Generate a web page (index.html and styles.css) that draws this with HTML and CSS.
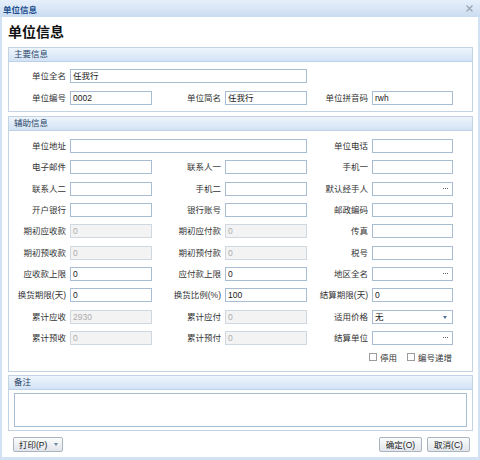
FILE: index.html
```html
<!DOCTYPE html>
<html lang="zh">
<head>
<meta charset="utf-8">
<title>单位信息</title>
<link rel="stylesheet" href="styles.css">
</head>
<body>
<div class="window">
  <div class="titlebar">
    <span class="title">单位信息</span>
    <svg class="close" width="7" height="7" viewBox="0 0 7 7"><path d="M0.5 0.5L6.5 6.5M6.5 0.5L0.5 6.5" stroke="#9aa4ae" stroke-width="1.2" fill="none"/></svg>
  </div>
  <div class="content">
    <div class="heading">单位信息</div>

    <div class="fs fs-main">
      <div class="fs-head">主要信息</div>
      <div class="grid">
        <div class="lbl">单位全名</div><div class="inp wide">任我行</div>
        <div class="lbl first">单位编号</div><div class="inp">0002</div>
        <div class="lbl">单位简名</div><div class="inp">任我行</div>
        <div class="lbl">单位拼音码</div><div class="inp">rwh</div>
      </div>
    </div>

    <div class="fs fs-aux">
      <div class="fs-head">辅助信息</div>
      <div class="grid">
        <div class="lbl">单位地址</div><div class="inp wide"></div>
        <div class="lbl">单位电话</div><div class="inp"></div>

        <div class="lbl">电子邮件</div><div class="inp"></div>
        <div class="lbl">联系人一</div><div class="inp"></div>
        <div class="lbl">手机一</div><div class="inp"></div>

        <div class="lbl">联系人二</div><div class="inp"></div>
        <div class="lbl">手机二</div><div class="inp"></div>
        <div class="lbl">默认经手人</div><div class="inp"><span class="dots"><i></i><i></i><i></i></span></div>

        <div class="lbl">开户银行</div><div class="inp"></div>
        <div class="lbl">银行账号</div><div class="inp"></div>
        <div class="lbl">邮政编码</div><div class="inp"></div>

        <div class="lbl">期初应收款</div><div class="inp dis">0</div>
        <div class="lbl">期初应付款</div><div class="inp dis">0</div>
        <div class="lbl">传真</div><div class="inp"></div>

        <div class="lbl">期初预收款</div><div class="inp dis">0</div>
        <div class="lbl">期初预付款</div><div class="inp dis">0</div>
        <div class="lbl">税号</div><div class="inp"></div>

        <div class="lbl">应收款上限</div><div class="inp">0</div>
        <div class="lbl">应付款上限</div><div class="inp">0</div>
        <div class="lbl">地区全名</div><div class="inp"><span class="dots"><i></i><i></i><i></i></span></div>

        <div class="lbl">换货期限(天)</div><div class="inp">0</div>
        <div class="lbl">换货比例(%)</div><div class="inp">100</div>
        <div class="lbl">结算期限(天)</div><div class="inp">0</div>

        <div class="lbl">累计应收</div><div class="inp dis">2930</div>
        <div class="lbl">累计应付</div><div class="inp dis">0</div>
        <div class="lbl">适用价格</div><div class="inp">无<span class="arrow"></span></div>

        <div class="lbl">累计预收</div><div class="inp dis">0</div>
        <div class="lbl">累计预付</div><div class="inp dis">0</div>
        <div class="lbl">结算单位</div><div class="inp"><span class="dots"><i></i><i></i><i></i></span></div>
      </div>
      <div class="checks">
        <span class="cb"></span><span class="cb-text">停用</span>
        <span class="cb"></span><span class="cb-text">编号递增</span>
      </div>
    </div>

    <div class="fs fs-note">
      <div class="fs-head">备注</div>
      <div class="note-area"></div>
    </div>

    <div class="footer">
      <div class="btn btn-print">打印(P)<span class="btn-arrow"></span></div>
      <div class="btn-group">
        <div class="btn btn-std">确定(O)</div>
        <div class="btn btn-std">取消(C)</div>
      </div>
    </div>
  </div>
</div>
</body>
</html>
```
FILE: styles.css
```css
html, body {
  margin: 0;
  padding: 0;
  width: 480px;
  height: 460px;
  overflow: hidden;
  background: #d2e2f3;
}
body {
  font-family: "Liberation Sans", "Noto Sans CJK SC", sans-serif;
  font-size: 8.5px;
  color: #333;
}
.window {
  display: flex;
  flex-direction: column;
  height: 460px;
}
.titlebar {
  flex: none;
  height: 17px;
  box-sizing: border-box;
  display: flex;
  align-items: center;
  justify-content: space-between;
  padding: 0 7px 0 3px;
  background: linear-gradient(#e6f0fb, #cadcf0);
}
.title {
  color: #1d4f8f;
  font-weight: bold;
  font-size: 8.5px;
}
.close { display: block; }
.content {
  flex: 1;
  margin: 0 2px 3px;
  padding: 0 5px 0 6px;
  background: #fff;
  display: flex;
  flex-direction: column;
}
.heading {
  flex: none;
  height: 30px;
  line-height: 30px;
  font-size: 14px;
  font-weight: bold;
  color: #111;
}
.fs {
  flex: none;
  border: 1px solid #c3d3e4;
}
.fs-head {
  height: 13px;
  line-height: 13px;
  border-bottom: 1px solid #bcd1e7;
  background: linear-gradient(#edf4fc, #d3e3f5);
  padding-left: 5px;
  color: #2a4667;
}
.grid {
  display: grid;
  grid-template-columns: 57px 82px 65px 82px 57px 81px;
  column-gap: 4px;
  align-items: center;
}
.fs-main .grid {
  padding: 7px 0 6px;
  row-gap: 8px;
}
.fs-aux {
  margin-top: 4px;
  padding-bottom: 8px;
}
.fs-aux .grid {
  padding-top: 8px;
  row-gap: 7.33px;
}
.lbl {
  text-align: right;
  white-space: nowrap;
  line-height: 14px;
  color: #333;
}
.first { grid-column-start: 1; }
.wide { grid-column: span 3; }
.inp {
  position: relative;
  height: 14px;
  box-sizing: border-box;
  border: 1px solid #a8bdd3;
  background: #fff;
  padding: 0 2px;
  line-height: 12px;
  color: #222;
  white-space: nowrap;
  overflow: hidden;
}
.inp.dis {
  background: #f3f3f3;
  border-color: #cfd8e1;
  color: #adadad;
}
.dots {
  position: absolute;
  right: 4px;
  top: 5px;
  display: flex;
  gap: 1px;
}
.dots i {
  display: block;
  width: 1px;
  height: 1px;
  background: #666;
}
.arrow {
  position: absolute;
  right: 5px;
  top: 5px;
  width: 0;
  height: 0;
  border-left: 2.5px solid transparent;
  border-right: 2.5px solid transparent;
  border-top: 3px solid #4f6f96;
}
.checks {
  display: flex;
  justify-content: flex-end;
  align-items: center;
  height: 11px;
  margin-top: 7px;
  padding-right: 20px;
}
.cb {
  width: 8px;
  height: 8px;
  box-sizing: border-box;
  border: 1px solid #9c9c9c;
  background: #fff;
  margin-right: 3px;
}
.cb-text {
  color: #333;
  margin-right: 10px;
}
.cb-text:last-child { margin-right: 0; }
.fs-note {
  margin-top: 3px;
}
.note-area {
  height: 34px;
  box-sizing: border-box;
  margin: 3px 5px 3px;
  border: 1px solid #a8bdd3;
  background: #fff;
}
.footer {
  flex: none;
  display: flex;
  justify-content: space-between;
  padding: 6px 3px 0 5px;
}
.btn {
  height: 15px;
  box-sizing: border-box;
  border: 1px solid #a9b4c0;
  border-radius: 2px;
  background: linear-gradient(#fcfcfc, #e1e5ea);
  display: flex;
  align-items: center;
  justify-content: center;
  color: #222;
}
.btn-print {
  width: 50px;
  justify-content: flex-start;
  padding-left: 5px;
}
.btn-arrow {
  width: 0;
  height: 0;
  margin-left: 7px;
  border-left: 2.5px solid transparent;
  border-right: 2.5px solid transparent;
  border-top: 3px solid #6a84a3;
}
.btn-group {
  display: flex;
  gap: 5px;
}
.btn-std {
  width: 43px;
}
```
